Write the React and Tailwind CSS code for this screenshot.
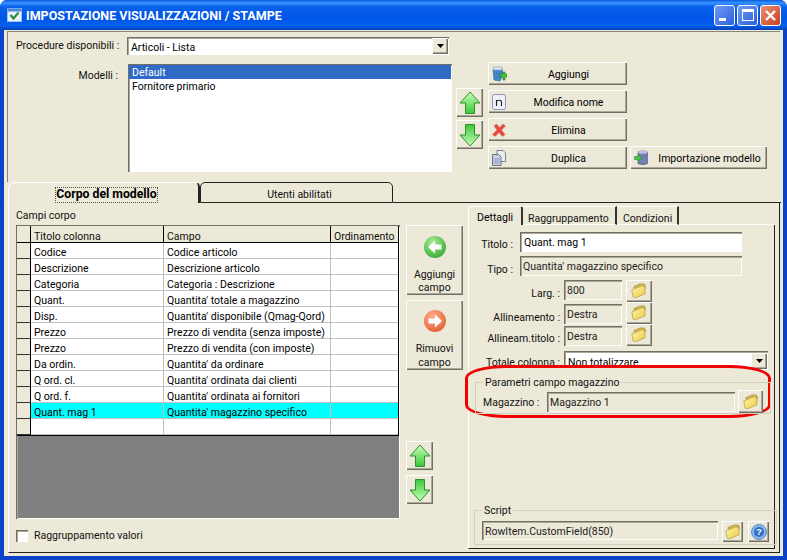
import React from "react";

const raised =
  "bg-[#ece9d8] shadow-[inset_1px_1px_0_#fff,inset_-1px_-1px_0_#716f64,inset_-2px_-2px_0_#aca899]";
const sunken =
  "shadow-[inset_1px_1px_0_#716f64,inset_2px_2px_0_#aca899,inset_-1px_-1px_0_#fff]";

const ArrowUp = () => (
  <svg width="22" height="24" viewBox="0 0 22 24">
    <defs>
      <linearGradient id="gu" x1="0" y1="0" x2="0" y2="1">
        <stop offset="0" stopColor="#c8ffb8" />
        <stop offset="1" stopColor="#39c83a" />
      </linearGradient>
    </defs>
    <path d="M11 1 L21 12 H15.5 V22.5 H6.5 V12 H1 Z" fill="url(#gu)" stroke="#2f8f2f" strokeLinejoin="round" />
  </svg>
);

const ArrowDown = () => (
  <svg width="22" height="24" viewBox="0 0 22 24">
    <defs>
      <linearGradient id="gd" x1="0" y1="0" x2="0" y2="1">
        <stop offset="0" stopColor="#39c83a" />
        <stop offset="1" stopColor="#c8ffb8" />
      </linearGradient>
    </defs>
    <path d="M6.5 1.5 H15.5 V12 H21 L11 23 L1 12 H6.5 Z" fill="url(#gd)" stroke="#2f8f2f" strokeLinejoin="round" />
  </svg>
);

const Folder = () => (
  <svg width="16" height="16" viewBox="0 0 16 16">
    <defs>
      <linearGradient id="fo" x1="0" y1="0" x2="1" y2="1">
        <stop offset="0" stopColor="#fff6a8" />
        <stop offset="1" stopColor="#eccb45" />
      </linearGradient>
    </defs>
    <path d="M3 5 L3 3.5 L9 1 L13.5 1 L14.5 4 L13 8 Z" fill="#d9b94a" stroke="#a08a45" strokeWidth="0.7" />
    <path d="M0.8 6.8 L11 2.8 L14 3.7 L14 10.8 L4.4 14.8 L2 14 Z" fill="url(#fo)" stroke="#b09a4a" strokeWidth="0.7" />
  </svg>
);

const AddIcon = () => (
  <svg width="15" height="16" viewBox="0 0 15 16">
    <path d="M1 3 L10 3 L11 9 L8 15 L2 14 Z" fill="#3f88c8" stroke="#2b5f96" strokeWidth="0.6" />
    <path d="M1.5 1 H10 V4 H1.5 Z" fill="#dfe6ee" stroke="#8ba0b8" strokeWidth="0.6" />
    <path d="M8 8 H11 V6 H13 V8 H15 V11 H13 V14 H11 V11 H8 Z" fill="#44c23c" stroke="#1f7a22" strokeWidth="0.6" />
  </svg>
);

const NameIcon = () => (
  <svg width="14" height="16" viewBox="0 0 14 16">
    <rect x="0.5" y="0.5" width="13" height="15" rx="2" fill="#eef0fa" stroke="#8d95bd" />
    <path d="M4.5 12 V6 M4.5 7.5 C5 6 9.5 5.5 9.5 8 V12" fill="none" stroke="#222" strokeWidth="1.1" />
  </svg>
);

const CrossIcon = () => (
  <svg width="14" height="14" viewBox="0 0 14 14">
    <path d="M2 3 L4.5 1 L7.5 4.5 L11 1 L13.5 3 L9.5 7 L13 11.5 L10.5 13.5 L7 9.5 L3 13.5 L0.5 11.5 L5 7 Z" fill="#e8493a" stroke="#d0705f" strokeWidth="0.5" />
  </svg>
);

const CopyIcon = () => (
  <svg width="14" height="16" viewBox="0 0 14 16">
    <path d="M5 0.5 H11 L13.5 3 V11.5 H5 Z" fill="#eceef6" stroke="#667" strokeWidth="0.8" />
    <path d="M0.5 4.5 H6.5 L9 7 V15.5 H0.5 Z" fill="#c5d2e6" stroke="#556" strokeWidth="0.8" />
    <path d="M2 9 H7.5 M2 11 H7.5 M2 13 H7.5" stroke="#7f8fb0" strokeWidth="0.8" />
  </svg>
);

const ImportIcon = () => (
  <svg width="14" height="16" viewBox="0 0 14 16">
    <path d="M4 2 C6 0.5 12 0.5 13.5 2 V13.5 C12 15 6 15 4 13.5 Z" fill="#6d7fb5" stroke="#445" strokeWidth="0.5" />
    <ellipse cx="8.8" cy="2.3" rx="4.6" ry="1.5" fill="#b9c4e0" />
    <path d="M0.5 6.5 H4 V4.5 L8 8 L4 11.5 V9.5 H0.5 Z" fill="#4cc24a" stroke="#207a25" strokeWidth="0.5" />
  </svg>
);

const CircleArrow = ({ dir, from, to, id }) => (
  <svg width="24" height="24" viewBox="0 0 24 24">
    <defs>
      <radialGradient id={id} cx="0.4" cy="0.3" r="0.8">
        <stop offset="0" stopColor={from} />
        <stop offset="1" stopColor={to} />
      </radialGradient>
    </defs>
    <circle cx="12" cy="12" r="11" fill={`url(#${id})`} />
    {dir === "left" ? (
      <path d="M5 12 L12 5.5 V9.5 H18.5 V14.5 H12 V18.5 Z" fill="#fff" />
    ) : (
      <path d="M19 12 L12 5.5 V9.5 H5.5 V14.5 H12 V18.5 Z" fill="#fff" />
    )}
  </svg>
);

const HelpIcon = () => (
  <svg width="16" height="16" viewBox="0 0 16 16">
    <circle cx="8" cy="8" r="7.5" fill="#8fb4ea" stroke="#5f8ccc" />
    <circle cx="8" cy="8" r="5" fill="#2f6fc8" />
    <text x="8" y="11" textAnchor="middle" fontSize="9" fontWeight="700" fill="#fff" fontFamily="Liberation Sans, sans-serif">?</text>
  </svg>
);

const TitleIcon = () => (
  <svg width="15" height="14" viewBox="0 0 15 14">
    <rect x="0.5" y="0.5" width="14" height="13" fill="#eaf2ff" stroke="#9fc0f0" />
    <rect x="0.5" y="0.5" width="14" height="3" fill="#4a86dc" />
    <path d="M3.5 7 L6.5 10.5 L11.5 4.5" fill="none" stroke="#2f8a3a" strokeWidth="2.2" />
  </svg>
);

const ComboArrow = () => (
  <div className={`${raised} w-[16px] h-[16px] flex items-center justify-center`}>
    <svg width="7" height="4" viewBox="0 0 7 4">
      <path d="M0 0 H7 L3.5 4 Z" fill="#000" />
    </svg>
  </div>
);

const IconButton = ({ icon, label, w }) => (
  <div className={`${raised} ${w} h-[23px] flex items-center shrink-0`}>
    <div className="w-[26px] pl-[4px] flex items-center shrink-0">{icon}</div>
    <div className="flex-1 text-center text-black pr-[4px] pt-[1px]">{label}</div>
  </div>
);

const FolderBtn = ({ className }) => (
  <div className={`${raised} ${className} flex items-center justify-center shrink-0`}>
    <Folder />
  </div>
);

const rows = [
  ["Codice", "Codice articolo"],
  ["Descrizione", "Descrizione articolo"],
  ["Categoria", "Categoria : Descrizione"],
  ["Quant.", "Quantita' totale a magazzino"],
  ["Disp.", "Quantita' disponibile (Qmag-Qord)"],
  ["Prezzo", "Prezzo di vendita (senza imposte)"],
  ["Prezzo", "Prezzo di vendita (con imposte)"],
  ["Da ordin.", "Quantita' da ordinare"],
  ["Q ord. cl.", "Quantita' ordinata dai clienti"],
  ["Q ord. f.", "Quantita' ordinata ai fornitori"],
  ["Quant. mag 1", "Quantita' magazzino specifico", true],
  ["", ""],
];

const ReadOnly = ({ children, className }) => (
  <div className={`${sunken} ${className} pl-[3px] pt-[4px] leading-[14px] text-[#222]`}>{children}</div>
);

const LabelledBox = ({ label, value, boxOffset, labelOffset }) => (
  <div className="flex h-[22px]">
    <div className={`w-[91px] text-right ${labelOffset}`}>{label}</div>
    <div className="w-[4px]" />
    <ReadOnly className={`w-[58px] h-[20px] ${boxOffset}`}>{value}</ReadOnly>
    <div className="w-[4px]" />
    <FolderBtn className="w-[26px] h-[22px]" />
  </div>
);

export default function App() {
  return (
    <div
      className="w-[787px] h-[560px] flex flex-col overflow-hidden bg-[#0a43c8] rounded-t-[7px] text-[10.5px] leading-[13px] text-[#111] whitespace-nowrap"
      style={{ fontFamily: 'Roboto, "Liberation Sans", sans-serif' }}
    >
      {/* title bar */}
      <div className="h-[30px] shrink-0 flex items-center pl-[7px] pr-[6px] bg-[linear-gradient(180deg,#0a5ae0_0%,#3a93ff_10%,#0a62ec_22%,#0055e5_60%,#0560f0_85%,#0240b8_100%)]">
        <TitleIcon />
        <div className="ml-[4px] text-white text-[12.5px] font-bold">IMPOSTAZIONE VISUALIZZAZIONI / STAMPE</div>
        <div className="ml-auto flex gap-[2px]">
          <div className="w-[21px] h-[21px] rounded-[3px] border border-white bg-[linear-gradient(135deg,#6f9cf5,#2a5fdc)] flex items-end pl-[4px] pb-[4px]">
            <div className="w-[7px] h-[3px] bg-white" />
          </div>
          <div className="w-[21px] h-[21px] rounded-[3px] border border-white bg-[linear-gradient(135deg,#6f9cf5,#2a5fdc)] flex items-center justify-center">
            <div className="w-[12px] h-[12px] border border-white border-t-[3px]" />
          </div>
          <div className="w-[21px] h-[21px] rounded-[3px] border border-white bg-[linear-gradient(135deg,#e8907a,#c8401c)] flex items-center justify-center">
            <svg width="13" height="13" viewBox="0 0 13 13">
              <path d="M2 2 L11 11 M11 2 L2 11" stroke="#fff" strokeWidth="2.4" />
            </svg>
          </div>
        </div>
      </div>

      {/* client area */}
      <div className="h-[526px] mx-[4px] bg-[#ece9d8] pl-[3px] pr-[3px] flex flex-col">
        <div className="h-[151px] shrink-0 border-t border-l border-[#8a8878] mt-[1px] flex">
          <div className="w-[444px] pl-[8px] shrink-0">
            <div className="flex mt-[5px]">
              <div className="w-[102px] pt-[2px]">Procedure disponibili :</div>
              <div className={`${sunken} bg-white ml-[9px] w-[322px] h-[18px] flex items-center pl-[4px] pr-[1px] text-black`}>
                <div className="flex-1 pt-[2px]">Articoli - Lista</div>
                <ComboArrow />
              </div>
            </div>
            <div className="flex mt-[9px]">
              <div className="w-[102px] text-right pt-[5px]">Modelli :</div>
              <div className={`${sunken} bg-white ml-[10px] w-[324px] h-[108px] pt-[1px] pl-[1px] pr-[1px] text-black`}>
                <div className="bg-[#316ac5] text-white h-[14px] pl-[3px] leading-[15px]">Default</div>
                <div className="h-[13px] pl-[3px] leading-[15px]">Fornitore primario</div>
              </div>
            </div>
          </div>
          <div className="ml-[4px] mt-[56px] flex flex-col gap-[3px] shrink-0">
            <div className={`${raised} w-[27px] h-[29px] flex items-center justify-center`}><ArrowUp /></div>
            <div className={`${raised} w-[27px] h-[29px] flex items-center justify-center`}><ArrowDown /></div>
          </div>
          <div className="ml-[5px] mt-[30px] flex flex-col gap-[5px]">
            <IconButton icon={<AddIcon />} label="Aggiungi" w="w-[139px]" />
            <IconButton icon={<NameIcon />} label="Modifica nome" w="w-[139px]" />
            <IconButton icon={<CrossIcon />} label="Elimina" w="w-[139px]" />
            <div className="flex gap-[3px]">
              <IconButton icon={<CopyIcon />} label="Duplica" w="w-[139px]" />
              <IconButton icon={<ImportIcon />} label="Importazione modello" w="w-[137px]" />
            </div>
          </div>
        </div>

        {/* outer tabs */}
        <div className="h-[21px] shrink-0 flex">
          <div className="w-[1px] border-b border-white" />
          <div className="w-[192px] border-t border-l border-t-white border-l-white border-r-2 border-r-[#222] rounded-tl-[7px] rounded-tr-[5px] flex justify-center pt-[5px] pl-[6px]">
            <span className="font-bold text-[12.25px] text-black h-[14px] outline-1 outline-dotted outline-[#555]">Corpo del modello</span>
          </div>
          <div className="w-[193px] border border-[#222] rounded-t-[5px] flex justify-center pt-[5px] pl-[6px]">Utenti abilitati</div>
          <div className="flex-1 border-b border-[#222] mr-[-1px]" />
        </div>

        <div className="h-[350px] shrink-0 ml-[1px] border-l border-l-white border-r border-r-[#222] border-b border-b-[#222] flex">
          <div className="w-[384px] ml-[7px] pt-[6px] shrink-0">
            <div className="h-[13px] mb-[3px]">Campi corpo</div>
            <div className={`${sunken} h-[294px] bg-[#808080] p-[1px]`}>
              <div className="w-[382px] border-r border-b border-black bg-white">
                <div className="h-[17px] flex bg-[#ece9d8] border-b border-black">
                  <div className="w-[14px] border-r border-black" />
                  <div className="w-[133px] border-r border-black pl-[3px] pt-[4px]">Titolo colonna</div>
                  <div className="w-[167px] border-r border-black pl-[3px] pt-[4px]">Campo</div>
                  <div className="flex-1 pl-[3px] pt-[4px]">Ordinamento</div>
                </div>
                {rows.map(([title, field, active], i) => (
                  <div key={i} className={`h-[16px] flex ${active ? "bg-[#00ffff]" : "bg-white"}`}>
                    <div className="w-[14px] bg-[#ece9d8] border-r border-b border-r-black border-b-[#333]" />
                    <div className="w-[133px] border-r border-b border-[#c0c0c0] pl-[3px] pt-[2px] leading-[15px] text-black">{title}</div>
                    <div className="w-[167px] border-r border-b border-[#c0c0c0] pl-[3px] pt-[2px] leading-[15px] text-black">{field}</div>
                    <div className="flex-1 border-b border-[#c0c0c0]" />
                  </div>
                ))}
              </div>
            </div>
            <div className="flex items-center mt-[10px]">
              <div className={`${sunken} bg-white w-[12px] h-[12px]`} />
              <div className="ml-[6px]">Raggruppamento valori</div>
            </div>
          </div>

          <div className="w-[57px] ml-[6px] pt-[22px] shrink-0">
            <div className={`${raised} h-[70px] flex flex-col items-center pt-[10px] text-center`}>
              <CircleArrow dir="left" from="#a8f090" to="#2fa52f" id="ca" />
              <div className="mt-[9px]">Aggiungi<br />campo</div>
            </div>
            <div className={`${raised} h-[70px] mt-[5px] flex flex-col items-center pt-[9px] text-center`}>
              <CircleArrow dir="right" from="#ffb090" to="#e05a2a" id="cr" />
              <div className="mt-[9px] leading-[14px]">Rimuovi<br />campo</div>
            </div>
            <div className={`${raised} w-[27px] h-[29px] mt-[71px] flex items-center justify-center`}><ArrowUp /></div>
            <div className={`${raised} w-[27px] h-[29px] mt-[5px] flex items-center justify-center`}><ArrowDown /></div>
          </div>

          {/* inner tabs */}
          <div className="w-[307px] ml-[5px] pt-[3px] shrink-0">
            <div className="h-[19px] flex">
              <div className="w-[55px] border-t border-l border-t-white border-l-white border-r-2 border-r-[#333] rounded-t-[3px] pl-[8px] pt-[4px] text-black">Dettagli</div>
              <div className="w-[94px] border-r-2 border-r-[#333] border-t border-t-white border-b border-b-white pl-[5px] pt-[5px]">Raggruppamento</div>
              <div className="w-[62px] border-r-2 border-r-[#333] border-t border-t-white border-b border-b-white pl-[6px] pt-[5px]">Condizioni</div>
              <div className="flex-1 border-b border-white" />
            </div>
            <div className="relative h-[324px] border-l border-l-white border-r border-r-[#222] border-b border-b-[#222] flex flex-col">
              <div className="flex mt-[7px]">
                <div className="w-[44px] text-right pt-[6px]">Titolo :</div>
                <div className={`${sunken} bg-white ml-[7px] w-[222px] h-[20px] pl-[4px] pt-[4px] text-black`}>Quant. mag 1</div>
              </div>
              <div className="flex mt-[4px]">
                <div className="w-[44px] text-right pt-[7px]">Tipo :</div>
                <ReadOnly className="ml-[7px] w-[222px] h-[20px]">Quantita' magazzino specifico</ReadOnly>
              </div>
              <div className="mt-[4px]">
                <LabelledBox label="Larg. :" value="800" boxOffset="" labelOffset="pt-[7px]" />
                <LabelledBox label="Allineamento :" value="Destra" boxOffset="mt-[2px]" labelOffset="pt-[9px]" />
                <LabelledBox label="Allineam.titolo :" value="Destra" boxOffset="mt-[2px]" labelOffset="pt-[8px]" />
              </div>
              <div className="flex mt-[5px]">
                <div className="w-[91px] text-right pt-[5px]">Totale colonna :</div>
                <div className={`${sunken} bg-white ml-[4px] w-[204px] h-[19px] pl-[4px] pr-[1px] pt-[1px] flex items-center text-black`}>
                  <div className="flex-1 pt-[3px]">Non totalizzare</div>
                  <ComboArrow />
                </div>
              </div>

              {/* red marker drawn over the form */}
              <div className="absolute left-[-4px] top-[140px] w-[306px] h-[53px] border-[3px] border-[#f00000] rounded-[42px/13px] bg-[#ece9d8]">
                <fieldset className="ml-[7px] w-[292px] h-[38px] mt-[8px] border border-[#d0d0bf] px-[7px]">
                  <legend className="px-[2px] leading-[13px]">Parametri campo magazzino</legend>
                  <div className="flex items-center pt-[1px]">
                    <div className="w-[60px] shrink-0 pt-[2px]">Magazzino :</div>
                    <ReadOnly className="ml-[4px] w-[188px] h-[20px]">Magazzino 1</ReadOnly>
                    <FolderBtn className="ml-[3px] w-[25px] h-[23px]" />
                  </div>
                </fieldset>
              </div>

              <fieldset className="mt-auto mb-[3px] ml-[5px] w-[296px] h-[41px] border border-[#d0d0bf] px-[7px]">
                <legend className="px-[2px] leading-[13px]">Script</legend>
                <div className="flex pt-[4px]">
                  <ReadOnly className="w-[236px] h-[19px]">RowItem.CustomField(850)</ReadOnly>
                  <FolderBtn className="ml-[4px] w-[21px] h-[21px]" />
                  <div className={`${raised} ml-[5px] w-[21px] h-[21px] flex items-center justify-center shrink-0`}><HelpIcon /></div>
                </div>
              </fieldset>
            </div>
          </div>
        </div>
      </div>
    </div>
  );
}
